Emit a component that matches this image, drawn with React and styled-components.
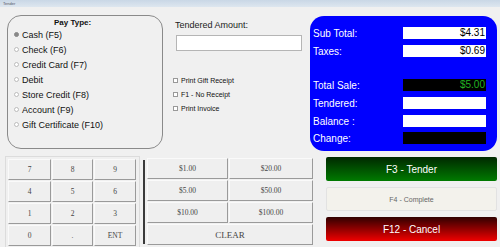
import styled, { createGlobalStyle } from "styled-components";

const GlobalStyle = createGlobalStyle`
  html, body {
    margin: 0;
    padding: 0;
    background: #f0f0f0;
    font-family: "Liberation Sans", Arial, sans-serif;
  }
`;

const payTypes = [
  "Cash (F5)",
  "Check (F6)",
  "Credit Card (F7)",
  "Debit",
  "Store Credit (F8)",
  "Account (F9)",
  "Gift Certificate (F10)",
];

const receipts = ["Print Gift Receipt", "F1 - No Receipt", "Print Invoice"];

const totals = [
  { label: "Sub Total:", value: "$4.31", dark: false, top: 0 },
  { label: "Taxes:", value: "$0.69", dark: false, top: 6 },
  { label: "Total Sale:", value: "$5.00", dark: true, top: 22 },
  { label: "Tendered:", value: "", dark: false, top: 6 },
  { label: "Balance :", value: "", dark: false, top: 6 },
  { label: "Change:", value: "", dark: true, top: 5 },
];

const keys = ["7", "8", "9", "4", "5", "6", "1", "2", "3", "0", ".", "ENT"];
const money = ["$1.00", "$20.00", "$5.00", "$50.00", "$10.00", "$100.00"];

export default function App() {
  return (
    <Window>
      <GlobalStyle />
      <TitleBar>Tender</TitleBar>
      <TopRow>
        <PayGroup>
          <GroupTitle>Pay Type:</GroupTitle>
          {payTypes.map((p, i) => (
            <RadioRow key={p}>
              <Radio checked={i === 0} />
              {p}
            </RadioRow>
          ))}
        </PayGroup>
        <Middle>
          <FieldLabel>Tendered Amount:</FieldLabel>
          <AmountInput />
          <Checks>
            {receipts.map((r) => (
              <CheckRow key={r}>
                <CheckBox />
                {r}
              </CheckRow>
            ))}
          </Checks>
        </Middle>
        <TotalsPanel>
          {totals.map((t) => (
            <TotalRow key={t.label} $top={t.top}>
              <TotalLabel>{t.label}</TotalLabel>
              <TotalValue $dark={t.dark}>{t.value}</TotalValue>
            </TotalRow>
          ))}
        </TotalsPanel>
      </TopRow>
      <BottomRow>
        <Keypad>
          {keys.map((k) => (
            <PadButton key={k}>{k}</PadButton>
          ))}
        </Keypad>
        <Divider />
        <MoneyPad>
          {money.map((m) => (
            <PadButton key={m}>{m}</PadButton>
          ))}
          <PadButton $wide $big>CLEAR</PadButton>
        </MoneyPad>
        <Actions>
          <ActionButton $variant="tender">F3 - Tender</ActionButton>
          <ActionButton $variant="complete">F4 - Complete</ActionButton>
          <ActionButton $variant="cancel">F12 - Cancel</ActionButton>
        </Actions>
      </BottomRow>
    </Window>
  );
}

const Window = styled.div`
  width: 500px;
  height: 247px;
  overflow: hidden;
  background: #f0f0f0;
`;

const TitleBar = styled.div`
  height: 7px;
  background: linear-gradient(#c9d7e6, #dde6ef);
  font-size: 4px;
  line-height: 7px;
  padding-left: 3px;
  color: #556;
`;

const TopRow = styled.div`
  display: flex;
  align-items: flex-start;
  padding: 8px 3px 0 7px;
  height: 135px;
`;

const PayGroup = styled.div`
  width: 156px;
  height: 134px;
  border: 1px solid #8a8a8a;
  border-radius: 14px;
  padding: 0 0 0 5px;
  box-sizing: border-box;
  display: flex;
  flex-direction: column;
`;

const GroupTitle = styled.div`
  font-size: 8px;
  line-height: 7px;
  height: 7px;
  font-weight: bold;
  margin: 3px 0 1px 41px;
  color: #111;
`;

const RadioRow = styled.div`
  display: flex;
  align-items: center;
  height: 15px;
  font-size: 9px;
  color: #111;
`;

const Radio = styled.span`
  width: 3px;
  height: 3px;
  border-radius: 50%;
  margin: 0 3px 0 1px;
  border: 1px solid ${(p) => (p.checked ? "#888" : "#bbb")};
  background: ${(p) => (p.checked ? "#888" : "#fff")};
`;

const Middle = styled.div`
  width: 130px;
  margin-left: 12px;
  display: flex;
  flex-direction: column;
`;

const FieldLabel = styled.div`
  font-size: 9px;
  line-height: 11px;
  color: #222;
  margin: 5px 0 0 0;
`;

const AmountInput = styled.div`
  width: 124px;
  height: 14px;
  margin: 4px 0 0 1px;
  background: #fff;
  border: 1px solid #b5b5b5;
`;

const Checks = styled.div`
  margin-top: 22px;
  display: flex;
  flex-direction: column;
`;

const CheckRow = styled.div`
  display: flex;
  align-items: center;
  height: 14px;
  font-size: 7px;
  color: #111;
  margin-left: -2px;
`;

const CheckBox = styled.span`
  width: 3px;
  height: 3px;
  border: 1px solid #999;
  background: #fff;
  margin-right: 3px;
`;

const TotalsPanel = styled.div`
  margin: 1px 0 0 auto;
  width: 187px;
  height: 135px;
  background: #0000ff;
  border-radius: 14px;
  box-sizing: border-box;
  padding: 11px 11px 0 3px;
  display: flex;
  flex-direction: column;
`;

const TotalRow = styled.div`
  display: flex;
  align-items: center;
  justify-content: space-between;
  margin-top: ${(p) => p.$top}px;
`;

const TotalLabel = styled.div`
  color: #fff;
  font-size: 10px;
`;

const TotalValue = styled.div`
  width: 83px;
  height: 12px;
  line-height: 12px;
  text-align: right;
  font-size: 10px;
  padding-right: 1px;
  box-sizing: border-box;
  background: ${(p) => (p.$dark ? "#000" : "#fff")};
  color: ${(p) => (p.$dark ? "#22b322" : "#000")};
`;

const BottomRow = styled.div`
  display: flex;
  align-items: flex-start;
  padding: 6px 3px 0 5px;
`;

const Keypad = styled.div`
  display: grid;
  grid-template-columns: 43px 41px 42px;
  grid-auto-rows: 21px;
  gap: 1px;
  padding: 2px;
  border: 1px solid #dcdcdc;
  width: 129px;
`;

const PadButton = styled.div`
  display: flex;
  align-items: center;
  justify-content: center;
  grid-column: ${(p) => (p.$wide ? "1 / -1" : "auto")};
  background: #efefef;
  border: 1px solid;
  border-color: #fafafa #9a9a9a #9a9a9a #fafafa;
  font-family: "Liberation Serif", "Times New Roman", serif;
  font-size: ${(p) => (p.$big ? "9px" : "7.5px")};
  color: #444;
`;

const Divider = styled.div`
  width: 2px;
  height: 84px;
  margin: 4px 0 0 3px;
  background: #3a3a3a;
`;

const MoneyPad = styled.div`
  display: grid;
  grid-template-columns: 81px 84px;
  grid-auto-rows: 21px;
  gap: 1px;
  padding: 2px 0 0 2px;
`;

const variants = {
  tender: "linear-gradient(#002800, #007a00); color: #fff; font-size: 10px;",
  complete: "#f3f2ec; color: #666; font-size: 7px; border: 1px solid #e2e2e2;",
  cancel: "linear-gradient(#300000, #f00000); color: #fff; font-size: 10px;",
};

const Actions = styled.div`
  margin-left: 13px;
  width: 171px;
  display: flex;
  flex-direction: column;
  gap: 6px;
  padding-top: 1px;
`;

const ActionButton = styled.div`
  height: 24px;
  box-sizing: border-box;
  display: flex;
  align-items: center;
  justify-content: center;
  border-radius: 2px;
  background: ${(p) => variants[p.$variant]};
`;
